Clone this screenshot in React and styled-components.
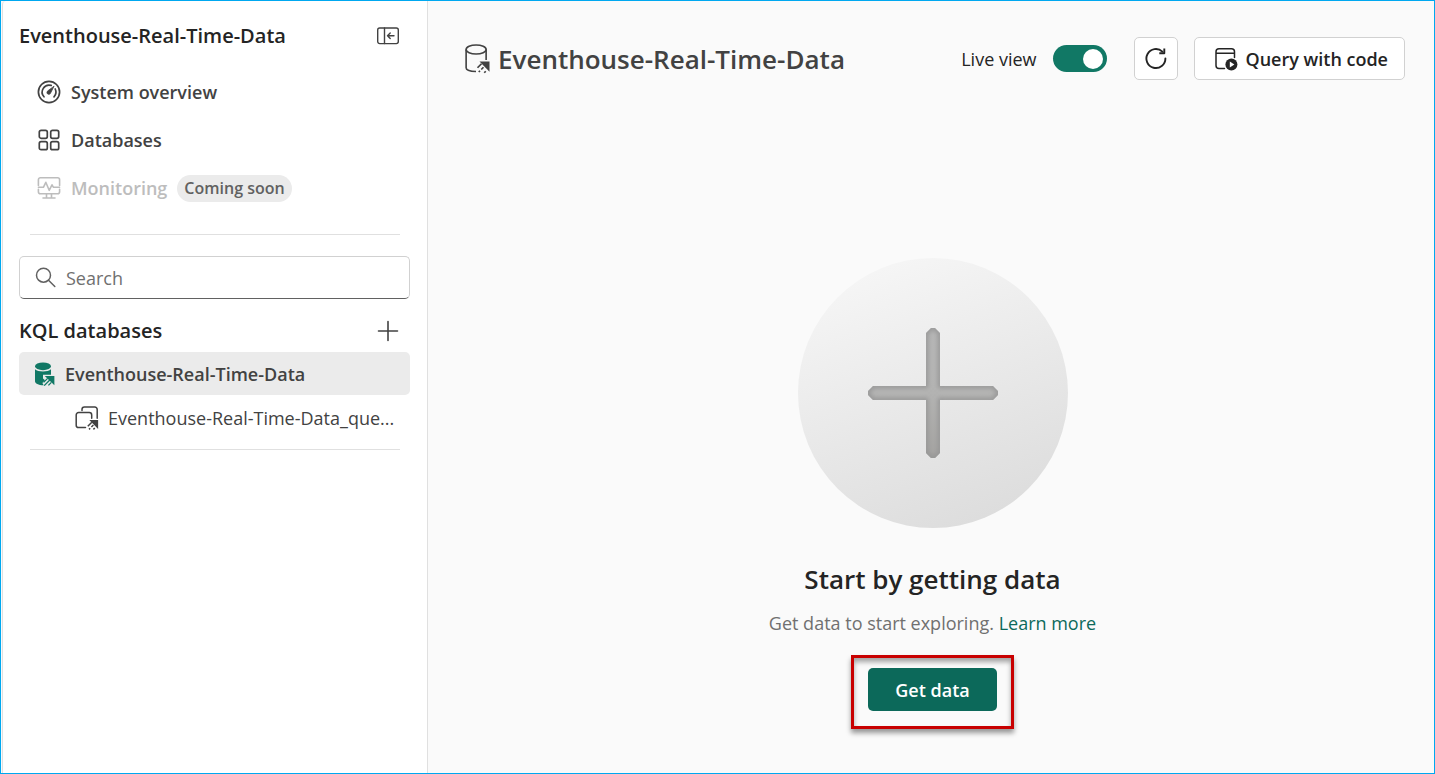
import React from "react";
import styled, { createGlobalStyle } from "styled-components";

const GlobalStyle = createGlobalStyle`
  * { box-sizing: border-box; }
  body { margin: 0; background: #fafafa; color: #242424; }
  body, button, input { font-family: "Open Sans", "Noto Sans", sans-serif; }
  h1, h2, p, ul { margin: 0; padding: 0; }
  svg { display: block; flex: none; }
`;

const Page = styled.div`
  display: flex;
  min-height: 100vh;
  border: 1px solid #00a8f0;
`;

const Sidebar = styled.aside`
  width: 426px;
  flex: none;
  margin-left: 1px;
  padding: 17px 17px 16px 16px;
  background: #fff;
  border: solid #e0e0e0;
  border-width: 0 1px;
  border-top-left-radius: 4px;
`;

const SectionHead = styled.div`
  display: flex;
  align-items: center;
  justify-content: space-between;
  height: 36px;
  padding-right: 10px;
`;

const SectionTitle = styled.h2`
  font-size: 20px;
  font-weight: 600;
  line-height: 28px;
  color: #242424;
`;

const IconButton = styled.button`
  display: flex;
  padding: 0;
  border: 0;
  background: none;
  color: #424242;
  cursor: pointer;
`;

const Nav = styled.nav`
  display: flex;
  flex-direction: column;
  padding: 14px 0 22px 18px;
`;

const NavItem = styled.button`
  display: flex;
  align-items: center;
  gap: 10px;
  height: 48px;
  padding: 0;
  border: 0;
  background: none;
  font-size: 18px;
  font-weight: 600;
  color: ${(p) => (p.disabled ? "#bdbdbd" : "#424242")};
`;

const Badge = styled.span`
  padding: 0 7px;
  border-radius: 14px;
  background: #ebebeb;
  color: #616161;
  font-size: 16px;
  line-height: 27px;
`;

const Divider = styled.hr`
  height: 1px;
  margin: 0 10px 0 11px;
  border: 0;
  background: #e0e0e0;
`;

const SearchBox = styled.label`
  display: flex;
  align-items: center;
  gap: 8px;
  height: 43px;
  margin: 21px 0 14px;
  padding: 0 14px;
  border: 1px solid #d1d1d1;
  border-bottom-color: #616161;
  border-radius: 5px;
  color: #616161;
`;

const SearchInput = styled.input`
  flex: 1;
  min-width: 0;
  padding: 0;
  border: 0;
  outline: 0;
  background: none;
  font-size: 18px;
  &::placeholder { color: #707070; opacity: 1; }
`;

const Tree = styled.ul`
  display: grid;
  gap: 1px;
  list-style: none;
  padding: 3px 0 10px;
`;

const TreeItem = styled.button`
  display: flex;
  align-items: center;
  gap: 9px;
  width: 100%;
  height: 43px;
  padding: 0 0 0 ${(p) => (p.$nested ? "56px" : "13px")};
  border: 0;
  border-radius: 5px;
  background: ${(p) => (p.$selected ? "#ebebeb" : "none")};
  color: #424242;
  font-size: 18px;
  font-weight: ${(p) => (p.$selected ? 600 : 400)};
  white-space: nowrap;
`;

const Main = styled.main`
  flex: 1;
  min-width: 0;
  padding: 36px 29px 43px 34px;
`;

const Toolbar = styled.header`
  display: flex;
  align-items: center;
  gap: 16px;
`;

const PageTitle = styled.h1`
  display: flex;
  align-items: center;
  gap: 6px;
  margin-right: auto;
  color: #424242;
  font-size: 26px;
  font-weight: 600;
  line-height: 36px;
`;

const SwitchLabel = styled.label`
  display: flex;
  align-items: center;
  gap: 16px;
  margin-right: 11px;
  font-size: 18px;
`;

const Switch = styled.input`
  appearance: none;
  display: flex;
  align-items: center;
  width: 54px;
  height: 27px;
  margin: 0;
  padding: 0 4px;
  border-radius: 14px;
  background: #9e9e9e;
  &::before {
    content: "";
    width: 20px;
    height: 20px;
    border-radius: 50%;
    background: #fff;
  }
  &:checked { justify-content: flex-end; background: #117865; }
`;

const ToolButton = styled.button`
  display: flex;
  align-items: center;
  justify-content: center;
  gap: 8px;
  min-width: 44px;
  height: 43px;
  padding: ${(p) => (p.$wide ? "0 16px 0 19px" : "0")};
  border: 1px solid #d1d1d1;
  border-radius: 5px;
  background: #fff;
  color: #242424;
  font-size: 18px;
  font-weight: 600;
`;

const EmptyState = styled.section`
  display: flex;
  flex-direction: column;
  align-items: center;
  padding: 178px 2px 0 0;
`;

const EmptyTitle = styled.h2`
  margin-top: 33px;
  font-size: 26px;
  font-weight: 600;
  line-height: 36px;
`;

const Hint = styled.p`
  margin: 13px 0 19px;
  color: #707070;
  font-size: 18px;
  line-height: 26px;
`;

const Link = styled.a`
  color: #0c695a;
  text-decoration: none;
`;

const Highlight = styled.div`
  padding: 10px 14px 15px;
  border: 3px solid #c80000;
  box-shadow: 0 4px 5px rgba(0, 0, 0, 0.4), inset 0 4px 5px rgba(0, 0, 0, 0.35);
`;

const PrimaryButton = styled.button`
  display: block;
  min-width: 129px;
  height: 43px;
  padding: 0 24px;
  border: 0;
  border-radius: 5px;
  background: #0c695a;
  color: #fff;
  font-size: 18px;
  font-weight: 600;
`;

const Green = styled.span`
  display: flex;
  color: #117865;
`;

function Icon({ size = 24, width = 1.5, children }) {
  return (
    <svg width={size} height={size} viewBox="0 0 24 24" fill="none" stroke="currentColor"
      strokeWidth={width} strokeLinecap="round" strokeLinejoin="round" aria-hidden="true">
      {children}
    </svg>
  );
}

const CollapseIcon = () => (
  <Icon width={1.4}>
    <rect x="1.7" y="4" width="20.6" height="15.6" rx="2" />
    <path d="M8.5 4v15.6M18 11.8h-6.5m2.7-2.7-2.7 2.7 2.7 2.7" />
  </Icon>
);

const GaugeIcon = () => (
  <Icon width={1.7}>
    <circle cx="12" cy="12" r="10.6" />
    <path d="M7 16.8A7 7 0 0 1 14.2 5.4M18.2 9A7 7 0 0 1 17 16.8" />
    <path d="M16.9 6.5 13.6 13a1.9 1.9 0 1 1-2.8-2.2z" fill="currentColor" strokeWidth="0.8" />
  </Icon>
);

const GridIcon = () => (
  <Icon width={1.7}>
    {[2.3, 13.7].map((y) => [2.3, 13.7].map((x) => (
      <rect key={`${x}-${y}`} x={x} y={y} width="8" height="8" rx="1.8" />
    )))}
  </Icon>
);

const MonitorIcon = () => (
  <Icon width={1.6}>
    <path d="M1.4 9.5V3.8a2 2 0 0 1 2-2h17.2a2 2 0 0 1 2 2v5.7M1.4 13.2v2.6a2 2 0 0 0 2 2h17.2a2 2 0 0 0 2-2v-2.6" />
    <path d="M1.4 11.3h5l2.4-5 3.4 8 2.8-5.5 1.5 2.5h6.1M9.5 18v3.8m5-3.8v3.8M6 22h12" />
  </Icon>
);

const SearchIcon = () => (
  <Icon width={1.5}>
    <circle cx="9.5" cy="9.2" r="7" />
    <path d="m14.5 14.2 6.3 6.3" />
  </Icon>
);

const AddIcon = () => <Icon width={1.6}><path d="M12 2.5v19M2.5 12h19" /></Icon>;

const Shortcut = () => (
  <>
    <path d="M14.3 14.1h8.8v8.8z" fill="currentColor" stroke="none" />
    <path d="m12.8 20.2 4-4M14 23.4l1.2-1.2m1.2-1.2 2-2M18.4 23.4l1.4-1.4" strokeWidth="1.5" strokeLinecap="butt" />
  </>
);

const DatabaseFilledIcon = () => (
  <Icon>
    <ellipse cx="11" cy="4.3" rx="8" ry="3.9" fill="currentColor" stroke="none" />
    <path d="M3 7.3c1.6 1.4 4.5 2.2 8 2.2s6.400-.8 8-2.200v5.400h-8v3.800l2 1.800-2.600 2.600 1.300 2.400C6.300 23.200 3 21.700 3 19.300z" fill="currentColor" stroke="none" />
    <path d="M12.800 14h9.600v9.300z" fill="currentColor" stroke="none" />
    <path d="m11.600 20.400 4-4M12.200 23.600l5.600-5.600M16.400 23.400l3-3" strokeWidth="1.300" strokeLinecap="butt" />
  </Icon>
);

const QuerysetIcon = () => (
  <Icon width={1.5}>
    <path d="M7 4.600V3.400A2.400 2.400 0 0 1 9.400 1h10.400a2.400 2.400 0 0 1 2.400 2.400v8.800" />
    <path d="M10.500 21.600H3.600a2.400 2.400 0 0 1-2.400-2.400V9a2.400 2.400 0 0 1 2.400-2.400h10.700A2.400 2.400 0 0 1 16.700 9v3.200" />
    <Shortcut />
  </Icon>
);

const DatabaseIcon = () => (
  <svg width="30" height="30" viewBox="0 0 24 24" fill="none" stroke="currentColor" strokeWidth="1.300" aria-hidden="true">
    <ellipse cx="11.300" cy="4.400" rx="8" ry="3.600" />
    <path d="M3.300 4.400v14.600c0 1.700 3 2.900 7.900 3M19.300 4.400v8.400" />
    <path d="M14 13.900h8v8.200z" fill="currentColor" stroke="none" />
    <path d="m12.400 19 3.200-3.200m-2.200 6.600 1-1m1-1 1.800-1.800m.6 4.400 1.200-1.200" strokeWidth="1.400" />
  </svg>
);

const RefreshIcon = () => (
  <Icon width={1.9}>
    <path d="M21.400 11.500A9.500 9.500 0 1 1 18.400 4.600" />
    <path d="M20.300 1.500v4.800h-5" strokeLinecap="butt" />
  </Icon>
);

const QueryIcon = () => (
  <Icon width={1.5}>
    <path d="M10.500 21.600H5a3 3 0 0 1-3-3V4.800a3 3 0 0 1 3-3h12.500a3 3 0 0 1 3 3v5.700M2 6.200h18.500" />
    <circle cx="17.400" cy="17.500" r="6" fill="currentColor" stroke="none" />
    <path d="m15.800 14.600 4.600 2.900-4.600 2.900z" fill="#fff" stroke="none" />
  </Icon>
);

const crossPath =
  "M133 70h4l5 5v53h53l5 5v4l-5 5h-53v53l-5 5h-4l-5-5v-53H75l-5-5v-4l5-5h53V75z";

const PlusIllustration = () => (
  <svg width="270" height="270" viewBox="0 0 270 270" aria-hidden="true">
    <defs>
      <linearGradient id="disc" x1="0.3" y1="0" x2="0.7" y2="1">
        <stop offset="0" stopColor="#f6f6f6" />
        <stop offset="1" stopColor="#dcdcdc" />
      </linearGradient>
      <linearGradient id="cross" x1="0" y1="0" x2="0" y2="1">
        <stop offset="0" stopColor="#b5b5b5" />
        <stop offset="0.5" stopColor="#b3b3b2" />
        <stop offset="1" stopColor="#a3a2a0" />
      </linearGradient>
      <clipPath id="crossShape"><path d={crossPath} /></clipPath>
      <filter id="soften"><feGaussianBlur stdDeviation="2" /></filter>
    </defs>
    <circle cx="135" cy="135" r="135" fill="url(#disc)" />
    <g clipPath="url(#crossShape)">
      <rect x="70" y="70" width="130" height="130" fill="url(#cross)" />
      <path d={crossPath} fill="none" stroke="#959595" strokeWidth="4" filter="url(#soften)" />
    </g>
  </svg>
);

export default function App() {
  return (
    <>
      <GlobalStyle />
      <Page>
        <Sidebar>
          <SectionHead>
            <SectionTitle>Eventhouse-Real-Time-Data</SectionTitle>
            <IconButton aria-label="Collapse pane"><CollapseIcon /></IconButton>
          </SectionHead>
          <Nav>
            <NavItem><GaugeIcon />System overview</NavItem>
            <NavItem><GridIcon />Databases</NavItem>
            <NavItem disabled><MonitorIcon />Monitoring <Badge>Coming soon</Badge></NavItem>
          </Nav>
          <Divider />
          <SearchBox>
            <SearchIcon />
            <SearchInput type="search" placeholder="Search" aria-label="Search" />
          </SearchBox>
          <SectionHead>
            <SectionTitle>KQL databases</SectionTitle>
            <IconButton aria-label="Add database"><AddIcon /></IconButton>
          </SectionHead>
          <Tree>
            <li><TreeItem $selected><Green><DatabaseFilledIcon /></Green>Eventhouse-Real-Time-Data</TreeItem></li>
            <li><TreeItem $nested><QuerysetIcon />Eventhouse-Real-Time-Data_que...</TreeItem></li>
          </Tree>
          <Divider />
        </Sidebar>
        <Main>
          <Toolbar>
            <PageTitle><DatabaseIcon />Eventhouse-Real-Time-Data</PageTitle>
            <SwitchLabel>Live view<Switch type="checkbox" role="switch" defaultChecked /></SwitchLabel>
            <ToolButton aria-label="Refresh"><RefreshIcon /></ToolButton>
            <ToolButton $wide><QueryIcon />Query with code</ToolButton>
          </Toolbar>
          <EmptyState>
            <PlusIllustration />
            <EmptyTitle>Start by getting data</EmptyTitle>
            <Hint>Get data to start exploring. <Link href="#learn">Learn more</Link></Hint>
            <Highlight><PrimaryButton>Get data</PrimaryButton></Highlight>
          </EmptyState>
        </Main>
      </Page>
    </>
  );
}
